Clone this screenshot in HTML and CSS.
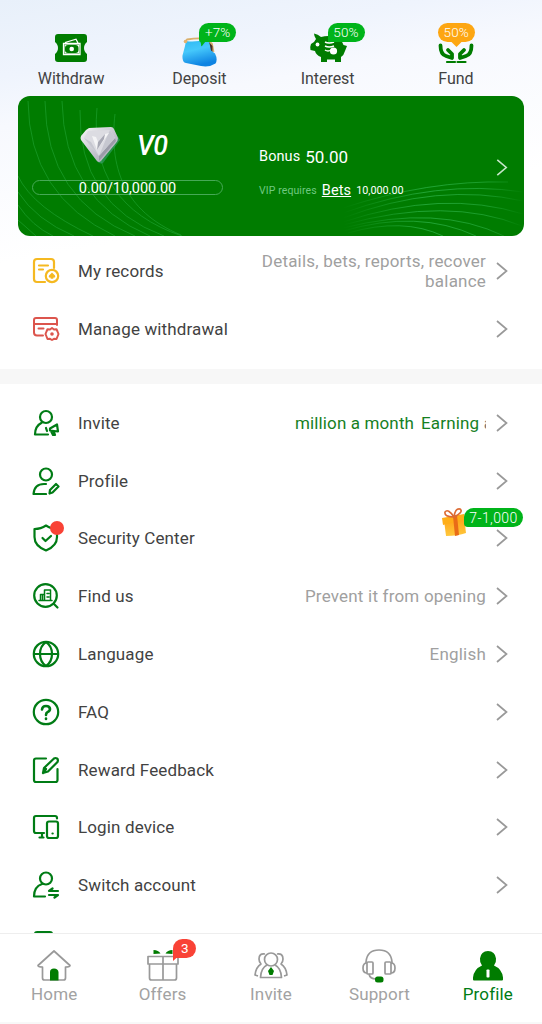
FILE: index.html
```html
<!DOCTYPE html>
<html lang="en">
<head>
<meta charset="utf-8">
<title>Profile</title>
<link rel="stylesheet" href="styles.css">
</head>
<body>
<svg class="defs" width="0" height="0">
  <defs>
    <symbol id="chev" viewBox="0 0 12 18"><path d="M1 1l9.500 8L1 17" fill="none" stroke="currentColor" stroke-width="1.700"/></symbol>
    <linearGradient id="purse" x1="0" y1="0" x2=".3" y2="1"><stop offset="0" stop-color="#2eb8f2"/><stop offset=".45" stop-color="#45c8fb"/><stop offset="1" stop-color="#0e83e2"/></linearGradient>
    <linearGradient id="silver" x1="0" y1="0" x2="1" y2="1"><stop offset="0" stop-color="#f7f7f8"/><stop offset=".5" stop-color="#c8c8d0"/><stop offset="1" stop-color="#a0a1ad"/></linearGradient>
    <linearGradient id="gold" x1="0" y1="0" x2="0" y2="1"><stop offset="0" stop-color="#ff9d13"/><stop offset="1" stop-color="#ffc83c"/></linearGradient>
    <linearGradient id="wave" gradientUnits="userSpaceOnUse" x1="325" y1="0" x2="506" y2="0"><stop offset="0" stop-color="#2eb44a" stop-opacity="0"/><stop offset=".45" stop-color="#2eb44a" stop-opacity=".9"/><stop offset=".8" stop-color="#2eb44a" stop-opacity=".7"/><stop offset="1" stop-color="#2eb44a" stop-opacity="0"/></linearGradient>
  </defs>
</svg>
<div class="app">
  <nav class="quick">
    <a class="quick-item">
      <svg class="quick-icon" viewBox="0 0 36 38">
        <path fill="#007c00" d="M5 4h26q3 0 3 3v5c-4 3-4 9 0 12v5q0 3-3 3H5q-3 0-3-3v-5c4-3 4-9 0-12V7q0-3 3-3z"/>
        <path fill="none" stroke="#fff" stroke-width="1.300" d="M10.500 13.500h16.500v11h-16.500zM12 12.500l11-3.300 2 3.800"/>
        <rect x="11.500" y="14.500" width="14.500" height="9" fill="#fff"/><rect x="12" y="15" width="13.500" height="8" rx="3" fill="#007c00"/><circle cx="18.700" cy="19" r="2.300" fill="#fff"/>
      </svg>
      <span class="quick-label">Withdraw</span>
    </a>
    <a class="quick-item">
      <svg class="quick-icon" viewBox="0 0 36 38">
        <path fill="none" stroke="#d9b06c" stroke-width="1.800" d="M4 12l2-2.500q12-2 20-.5l5 5 1.500 8"/>
        <path fill="#4d302a" d="M23 11l5 1 3.500 4v7l-3-3-4-6z"/>
        <path fill="url(#purse)" d="M5 11q9 1.500 20-1.500 3 1 3.500 4l1.500 7 4 3q3 6 .5 10-6 4-14.500 2.500L5 33q-4-1-3.500-7.500L4 16z"/>
        <circle cx="4.500" cy="11.500" r="1.800" fill="#e4b26d"/>
      </svg>
      <span class="badge badge-deposit">+7%<svg viewBox="0 0 10 10"><path d="M0 0h10L3 9q-1 1-1-2z" fill="#00b41a"/></svg></span>
      <span class="quick-label">Deposit</span>
    </a>
    <a class="quick-item">
      <svg class="quick-icon wide" viewBox="0 0 40 38">
        <path fill="#007c00" d="M6 3.500q4 .5 7 3.500 11-3 19 3 3 2 3.500 5l3.500 1-2 5q-1 4-4 6v5h-6v-2.500h-8V32h-6v-5q-5-2-6-6L2.500 20q-.8-3 .5-6l3-2 2-3q-2-3-2-5.500z"/>
        <circle cx="9.500" cy="14.500" r="1.900" fill="#fff"/>
        <path stroke="#fff" stroke-width="1.500" fill="none" d="M17 12q4 2 9 0m-9 4q4 2 9 0m-9 4q3 2 6 0"/>
        <circle cx="25.500" cy="21" r="3.600" fill="#fff"/>
      </svg>
      <span class="badge badge-interest">50%</span>
      <span class="quick-label">Interest</span>
    </a>
    <a class="quick-item">
      <svg class="quick-icon" viewBox="0 0 36 38">
        <g fill="none" stroke="#007c00" stroke-width="3.800" stroke-linecap="round" stroke-linejoin="round"><path d="M2.500 15.500q0 9 5.500 10.500l6 2v-4l-4-4M33.500 15.500q0 9-5.500 10.500l-6 2v-4l4-4"/></g>
        <path d="M9 32h8M19.500 32h8" stroke="#007c00" stroke-width="2.200" stroke-linecap="round"/>
      </svg>
      <span class="badge badge-fund">50%<svg viewBox="0 0 10 5"><path d="M0 0h10L5 5z" fill="#fda612"/></svg></span>
      <span class="quick-label">Fund</span>
    </a>
  </nav>

  <section class="vip">
    <svg class="vip-lines" viewBox="0 0 506 140" fill="none" stroke-width=".8">
      <g opacity=".55" stroke="#2eb44a">
        <path d="M10 5Q11 100 97 140"/><path d="M27 5Q28 104 117 140"/><path d="M44 5Q46 104 132 140"/><path d="M62 14Q60 108 146 140"/><path d="M79 12Q70 108 164 140"/><path d="M97 18C91 70 105 115 163 139"/>
        <path d="M0 80Q15 112 75 140"/><path d="M0 96Q18 124 56 140"/><path d="M0 109Q14 130 35 140"/><path d="M0 124L18 140"/>
      </g>
      <g stroke="url(#wave)">
        <path d="M325 112Q410 84 490 86"/><path d="M325 117Q420 83 505 96"/><path d="M325 122Q420 86 505 105"/><path d="M325 126Q425 93 505 118"/><path d="M325 129Q430 100 504 130"/><path d="M325 132Q420 108 486 140"/><path d="M325 135Q400 113 458 140"/><path d="M330 137Q385 121 425 140"/>
      </g>
    </svg>
    <div class="vip-level">
      <div class="vip-rank">
        <svg class="diamond" viewBox="0 0 42 38">
          <path d="M8 1h22l7 11-17 23Q17 37 13 32L1 16q-2-3 0-6z" fill="#48a98c" opacity=".5" transform="translate(3 1)"/>
          <path d="M6 3l3-2 22-1q2 0 3 2l4 9q0 3-2 5L21 34q-2 2-4 0L1 13q-1-2 0-4z" fill="url(#silver)"/>
          <path d="M8 4l22-1 5 8-16 18L4 11z" fill="#dcdce2"/><path d="M19 29L35 11l1 3-17 20z" fill="#9a9ba8"/><path d="M4 11l7 4 8 14zM30 3l-4 9-7 17L35 11z" fill="#c6c7d0"/><path d="M12 9l4 1 2 5 7-8 4-1-12 17z" fill="#f4f4f6"/><path d="M18 15l7-8-1 5-7 11z" fill="#a7a8b4"/>
        </svg>
        <span class="vip-name">V0</span>
      </div>
      <div class="progress">0.00/10,000.00</div>
    </div>
    <div class="vip-info">
      <div class="bonus"><span class="bonus-label">Bonus</span><span class="bonus-value">50.00</span></div>
      <div class="require"><span class="req-label">VIP requires</span><span class="req-type">Bets</span><span class="req-value">10,000.00</span></div>
    </div>
    <svg class="vip-arrow"><use href="#chev"/></svg>
  </section>

  <main>
    <section class="list">
      <a class="row">
        <svg class="icon amber" viewBox="0 0 28 28"><path d="M13 25H5q-3 0-3-3V5q0-3 3-3h14q3 0 3 3v6M7 8.500h9M7 12.500h4"/><circle cx="20" cy="19" r="6.200"/><path class="fill" d="M20 15.500l3 3q1 2.500-2 2.200l.5 1h-3l.5-1q-3 .3-2-2.200z"/></svg>
        <span class="name">My records</span><span class="hint">Details, bets, reports, recover balance</span><svg class="arrow"><use href="#chev"/></svg>
      </a>
      <a class="row">
        <svg class="icon red" viewBox="0 0 28 28"><path d="M11 20.500H5q-3 0-3-3V5q0-2 2-2h19q2 0 2 2v5M2 9h23M6.500 13.500h5"/><path d="M20 13l2 1.500 2.500-.3 1 2.300 1 2.500-1 2.500-1 2.500-2.500-.2L20 25l-2-1.200-2.500.2-1-2.500-1-2.500 1-2.500 1-2.300 2.500.3z"/><circle class="fill" cx="20" cy="19" r="1.800"/></svg>
        <span class="name">Manage withdrawal</span><span class="hint"></span><svg class="arrow"><use href="#chev"/></svg>
      </a>
    </section>
    <section class="list">
      <a class="row">
        <svg class="icon" viewBox="0 0 28 28"><circle cx="14" cy="8" r="6"/><path d="M10 13.500C5 16 3 20 3 25.500h13M14 19l1 3M18 19.500l7-4 1 7-8-1zM19 22l2 4h2l-1-3"/></svg>
        <span class="name">Invite</span><span class="ticker"><span>million a month</span><span>Earning</span><i>a</i></span><svg class="arrow"><use href="#chev"/></svg>
      </a>
      <a class="row">
        <svg class="icon" viewBox="0 0 28 28"><circle cx="14" cy="7.500" r="6"/><path d="M14 17h-2C5 17 2 21 1.500 27H14M17.500 26.500l.5-3.500 6-6 2.500 2.500-6 6z"/></svg>
        <span class="name">Profile</span><span class="hint"></span><svg class="arrow"><use href="#chev"/></svg>
      </a>
      <a class="row security">
        <svg class="icon" viewBox="0 0 28 28"><path d="M14 1.500q5 3.500 11 3.500v8q0 9-11 13.500Q2.500 22 2.500 13V5Q9 5 14 1.500zM10.500 14l3 3 5.500-5"/></svg><b class="dot"></b>
        <span class="name">Security Center</span><span class="hint"></span><svg class="arrow"><use href="#chev"/></svg>
        <span class="reward">
          <svg viewBox="0 0 28 30"><path d="M3 12l20-4 2 17q-8 3-20 3z" fill="url(#gold)"/><path d="M1 10l22-4 2 5-23 6z" fill="#ffae18"/><path d="M12 8l4-1 2 20-4 1z" fill="#e96c17"/><path d="M13 9Q3 9 4 4q3-4 9 5Q14 0 19 1q4 3-6 8z" fill="none" stroke="#dc6a32" stroke-width="1.600"/></svg>
          <span class="badge reward-badge">7-1,000</span>
        </span>
      </a>
      <a class="row">
        <svg class="icon" viewBox="0 0 28 28"><circle cx="13.500" cy="13.500" r="11.300"/><path d="M22 22l3.500 3.500"/><path class="thin" d="M7 18.500h13M8.500 18.500v-6h4v6M12.500 18.500V8h6v10.500M15 11.500h2M15 15h2M10.500 12.500v6"/></svg>
        <span class="name">Find us</span><span class="hint">Prevent it from opening</span><svg class="arrow"><use href="#chev"/></svg>
      </a>
      <a class="row">
        <svg class="icon" viewBox="0 0 28 28"><circle cx="14" cy="14" r="12.200"/><path d="M2 14h24M14 2q-6 4-6 12t6 12q6-4 6-12T14 2z"/></svg>
        <span class="name">Language</span><span class="hint">English</span><svg class="arrow"><use href="#chev"/></svg>
      </a>
      <a class="row">
        <svg class="icon" viewBox="0 0 28 28"><circle cx="14" cy="14" r="12.200"/><path class="bold" d="M10 11.500q.3-3.500 4-3.500t4 3q0 2-2.500 3.200Q14 15 14 17M14 20.500v.5"/></svg>
        <span class="name">FAQ</span><span class="hint"></span><svg class="arrow"><use href="#chev"/></svg>
      </a>
      <a class="row">
        <svg class="icon" viewBox="0 0 28 28"><path d="M14 2.500H4q-2 0-2 2V24q0 2 2 2h19.500q2 0 2-2V13M11 17l1-5L22 2.500q1.500-1 3 0t.5 3.500L16 15.500zM11 17l3-4"/></svg>
        <span class="name">Reward Feedback</span><span class="hint"></span><svg class="arrow"><use href="#chev"/></svg>
      </a>
      <a class="row">
        <svg class="icon" viewBox="0 0 28 28"><path d="M12 20H4q-2 0-2-2V5q0-2 2-2h19q2 0 2 2v.5M10 20v4M7.500 24.500h4"/><rect x="15" y="8.500" width="11" height="16.500" rx="2"/><path d="M20.500 20.500h.2"/></svg>
        <span class="name">Login device</span><span class="hint"></span><svg class="arrow"><use href="#chev"/></svg>
      </a>
      <a class="row">
        <svg class="icon" viewBox="0 0 28 28"><circle cx="14" cy="7.500" r="6"/><path d="M10 13C4 15 2 20 2 25.500h11M26 20h-9l3.500-2.500M17 24h9l-3.500 2.500"/></svg>
        <span class="name">Switch account</span><span class="hint"></span><svg class="arrow"><use href="#chev"/></svg>
      </a>
      <a class="row" aria-label="Log out">
        <svg class="icon" viewBox="0 0 28 28"><path d="M20 9V5q0-2-2-2H5Q3 3 3 5v19q0 2 2 2h13q2 0 2-2v-5M11 14h14M21 10l4 4-4 4"/></svg>
        <span class="hint"></span><svg class="arrow"><use href="#chev"/></svg>
      </a>
    </section>
  </main>

  <footer class="tabs">
    <a class="tab"><svg viewBox="0 0 36 36"><path d="M18 3L2 17.500q0 1.500 4.500 1.500v11q0 2 2 2h19q2 0 2-2V19q4.500 0 4.500-1.500z"/><path class="g" d="M14 32.500V24q0-3.500 4-3.500t4.500 3.500v8.500z"/></svg>Home</a>
    <a class="tab"><svg viewBox="0 0 36 36"><path d="M4.500 16h27v14q0 2-2 2h-23q-2 0-2-2zM3 8.500h30v7.500H3zM18 8.500V32"/><path class="g" d="M8.500 2q5 0 7 3.500l-7 .5zM27.500 2q-5 0-7 3.500l7 .5z"/></svg><span class="badge tab-badge">3<svg viewBox="0 0 10 10"><path d="M0 0h10L0 9z" fill="#f94236"/></svg></span>Offers</a>
    <a class="tab"><svg viewBox="0 0 36 36"><circle cx="18" cy="11.500" r="6.500"/><path d="M14 17Q8 20 7.500 29.500h21Q28 20 22 17M12 6q-6-1-6 5 0 3 2 5-5 3-6 11l3 1M24 6q6-1 6 5 0 3-2 5 5 3 6 11l-3 1"/><path class="g" d="M18 19l3 4-1.500 4h-3L15 23z"/></svg>Invite</a>
    <a class="tab"><svg viewBox="0 0 36 36"><path d="M5 16v-2Q6 2 18 2t13 12v2"/><rect x="6" y="14" width="6" height="12" rx="1"/><rect x="24" y="14" width="6" height="12" rx="1"/><path d="M6 15q-4 0-4 5t4 5M30 15q4 0 4 5t-4 5M8 26q1 5 7 5"/><rect class="g" x="14" y="28.500" width="8.500" height="6" rx="2.500"/></svg>Support</a>
    <a class="tab active"><svg viewBox="0 0 36 36"><path class="g" d="M12 17.500q-2.500-3-2-7 1-7.500 8-7.500t8 7.500q.5 4-2 7 8 3.500 9 12v2q0 1-1 1H4q-1 0-1-1v-2q1-8.500 9-12z"/><rect x="16.500" y="21.500" width="3" height="8" rx=".8" fill="#fff" stroke="none"/></svg>Profile</a>
  </footer>
</div>
</body>
</html>
```
FILE: styles.css
```css
* { box-sizing: border-box; }
body { margin: 0; font-family: Roboto, "Liberation Sans", sans-serif; color: #424242; background: #fff; }
.defs { display: block; }
.app { height: 1024px; display: flex; flex-direction: column; overflow: hidden; background: linear-gradient(170deg, #e8f0fa 0, #eff4fd 75px, #f7f9fe 125px, #fff 260px); }

.quick { display: flex; height: 96px; padding: 30px 22px 0 7px; flex: none; }
.quick-item { flex: 1; position: relative; display: flex; flex-direction: column; align-items: center; }
.quick-icon { width: 36px; height: 38px; flex: none; }
.quick-icon.wide { width: 40px; }
.quick-label { font-size: 16px; line-height: 20px; letter-spacing: -.05px; margin-top: 1px; }

.badge { position: absolute; display: flex; align-items: center; justify-content: center; color: #fff; font-size: 13.5px; line-height: 1; letter-spacing: .1px; font-weight: 300; }
.badge-deposit, .badge-interest { left: 64px; top: -7px; width: 37px; height: 19px; border-radius: 10px; background: #00b41a; }
.badge-interest { border-bottom-left-radius: 0; }
.badge-deposit { border-bottom-left-radius: 2px; }
.badge-deposit svg { position: absolute; left: 0; top: 14px; width: 10px; height: 10px; }
.badge-fund { left: 46px; top: -7px; width: 37px; height: 19px; border-radius: 10px; background: #fda612; }
.badge-fund svg { position: absolute; left: 12px; top: 18px; width: 13px; height: 6px; }

.vip { position: relative; flex: none; display: flex; width: 506px; height: 140px; margin-left: 18px; border-radius: 12px; background: #007c00; color: #fff; overflow: hidden; }
.vip-lines { position: absolute; inset: 0; width: 506px; height: 140px; }
.vip-level { position: relative; width: 241px; padding: 31px 0 0 14px; }
.vip-rank { display: flex; height: 53px; padding-left: 48px; }
.diamond { width: 42px; height: 38px; }
.vip-name { font-size: 27.5px; line-height: 37px; font-weight: 500; font-style: italic; margin-left: 15px; letter-spacing: -.5px; transform: scaleX(.97); transform-origin: left; }
.progress { width: 191px; height: 15px; border: 1px solid #46a956; border-radius: 8px; font-size: 14.5px; line-height: 15px; text-align: center; letter-spacing: -.05px; }
.vip-info { position: relative; flex: 1; padding-top: 50px; }
.bonus { display: flex; align-items: center; height: 22px; gap: 5px; }
.bonus-label { font-size: 14.5px; letter-spacing: .1px; margin-top: -2px; }
.bonus-value { font-size: 17px; }
.require { display: flex; align-items: center; height: 20px; margin-top: 12px; gap: 5px; }
.req-label { font-size: 10.5px; color: #6fc981; letter-spacing: .1px; }
.req-type { font-size: 14.5px; text-decoration: underline; letter-spacing: .1px; }
.req-value { font-size: 10.8px; }
.vip-arrow { position: relative; width: 12px; height: 17px; margin: 63px 16px 0 0; color: #c5e5c8; }

main { flex: 1; min-height: 0; overflow: hidden; }
.list { padding: 6px 34.5px 11px 32px; }
.list + .list { border-top: 15px solid #f7f7f7; padding-top: 10.3px; }
.row { position: relative; display: flex; align-items: center; height: 57.8px; }
.icon { width: 28px; height: 28px; flex: none; color: #007c15; fill: none; stroke: currentColor; stroke-width: 2.2; stroke-linecap: round; stroke-linejoin: round; }
.icon .fill { fill: currentColor; stroke: none; }
.icon .thin { stroke-width: 1.5; }
.icon .bold { stroke-width: 2.6; }
.amber { color: #f5b921; }
.red { color: #dc554d; }
.red.icon { stroke-width: 2; }
.name { font-size: 17px; letter-spacing: .13px; margin-left: 18px; white-space: nowrap; }
.hint { flex: 1; padding-left: 90px; font-size: 17px; line-height: 20px; letter-spacing: .2px; text-align: right; color: #a0a0a0; }
.arrow { width: 12px; height: 18px; margin-left: 9.5px; color: #999; flex: none; }
.ticker { display: flex; gap: 7px; margin-left: auto; width: 191px; overflow: hidden; white-space: nowrap; font-size: 17px; letter-spacing: .13px; color: #16801f; }
.ticker i { font-style: normal; color: #777; margin-left: -2.5px; }
.dot { position: absolute; left: 18px; top: 12px; width: 14px; height: 14px; border-radius: 50%; background: #f94236; }
.reward { position: absolute; left: 409px; top: -1px; width: 84px; height: 31px; }
.reward > svg { width: 28px; height: 30px; }
.reward-badge { left: 23px; top: 0; width: 59px; height: 19px; border-radius: 10px 10px 10px 4px; background: #00b41a; font-size: 14px; letter-spacing: .4px; }

.tabs { flex: none; height: 91px; display: flex; background: #fff; border-top: 1px solid #eee; border-bottom: 2px solid #f8f8f8; }
.tab { position: relative; flex: 1; display: flex; flex-direction: column; align-items: center; padding-top: 14px; font-size: 17px; line-height: 20px; letter-spacing: .15px; color: #a2a2a2; }
.tab > svg { width: 36px; height: 36px; fill: none; stroke: #999; stroke-width: 1.7; stroke-linejoin: round; }
.tab .g { fill: #007c00; stroke: none; }
.tab.active { color: #007c15; }
.tab-badge { left: 65px; top: 5px; width: 23px; height: 19px; border-radius: 10px 10px 10px 0; background: #f94236; font-weight: 400; }
.tab-badge svg { position: absolute; left: 0; top: 14px; width: 9px; height: 9px; }
```
